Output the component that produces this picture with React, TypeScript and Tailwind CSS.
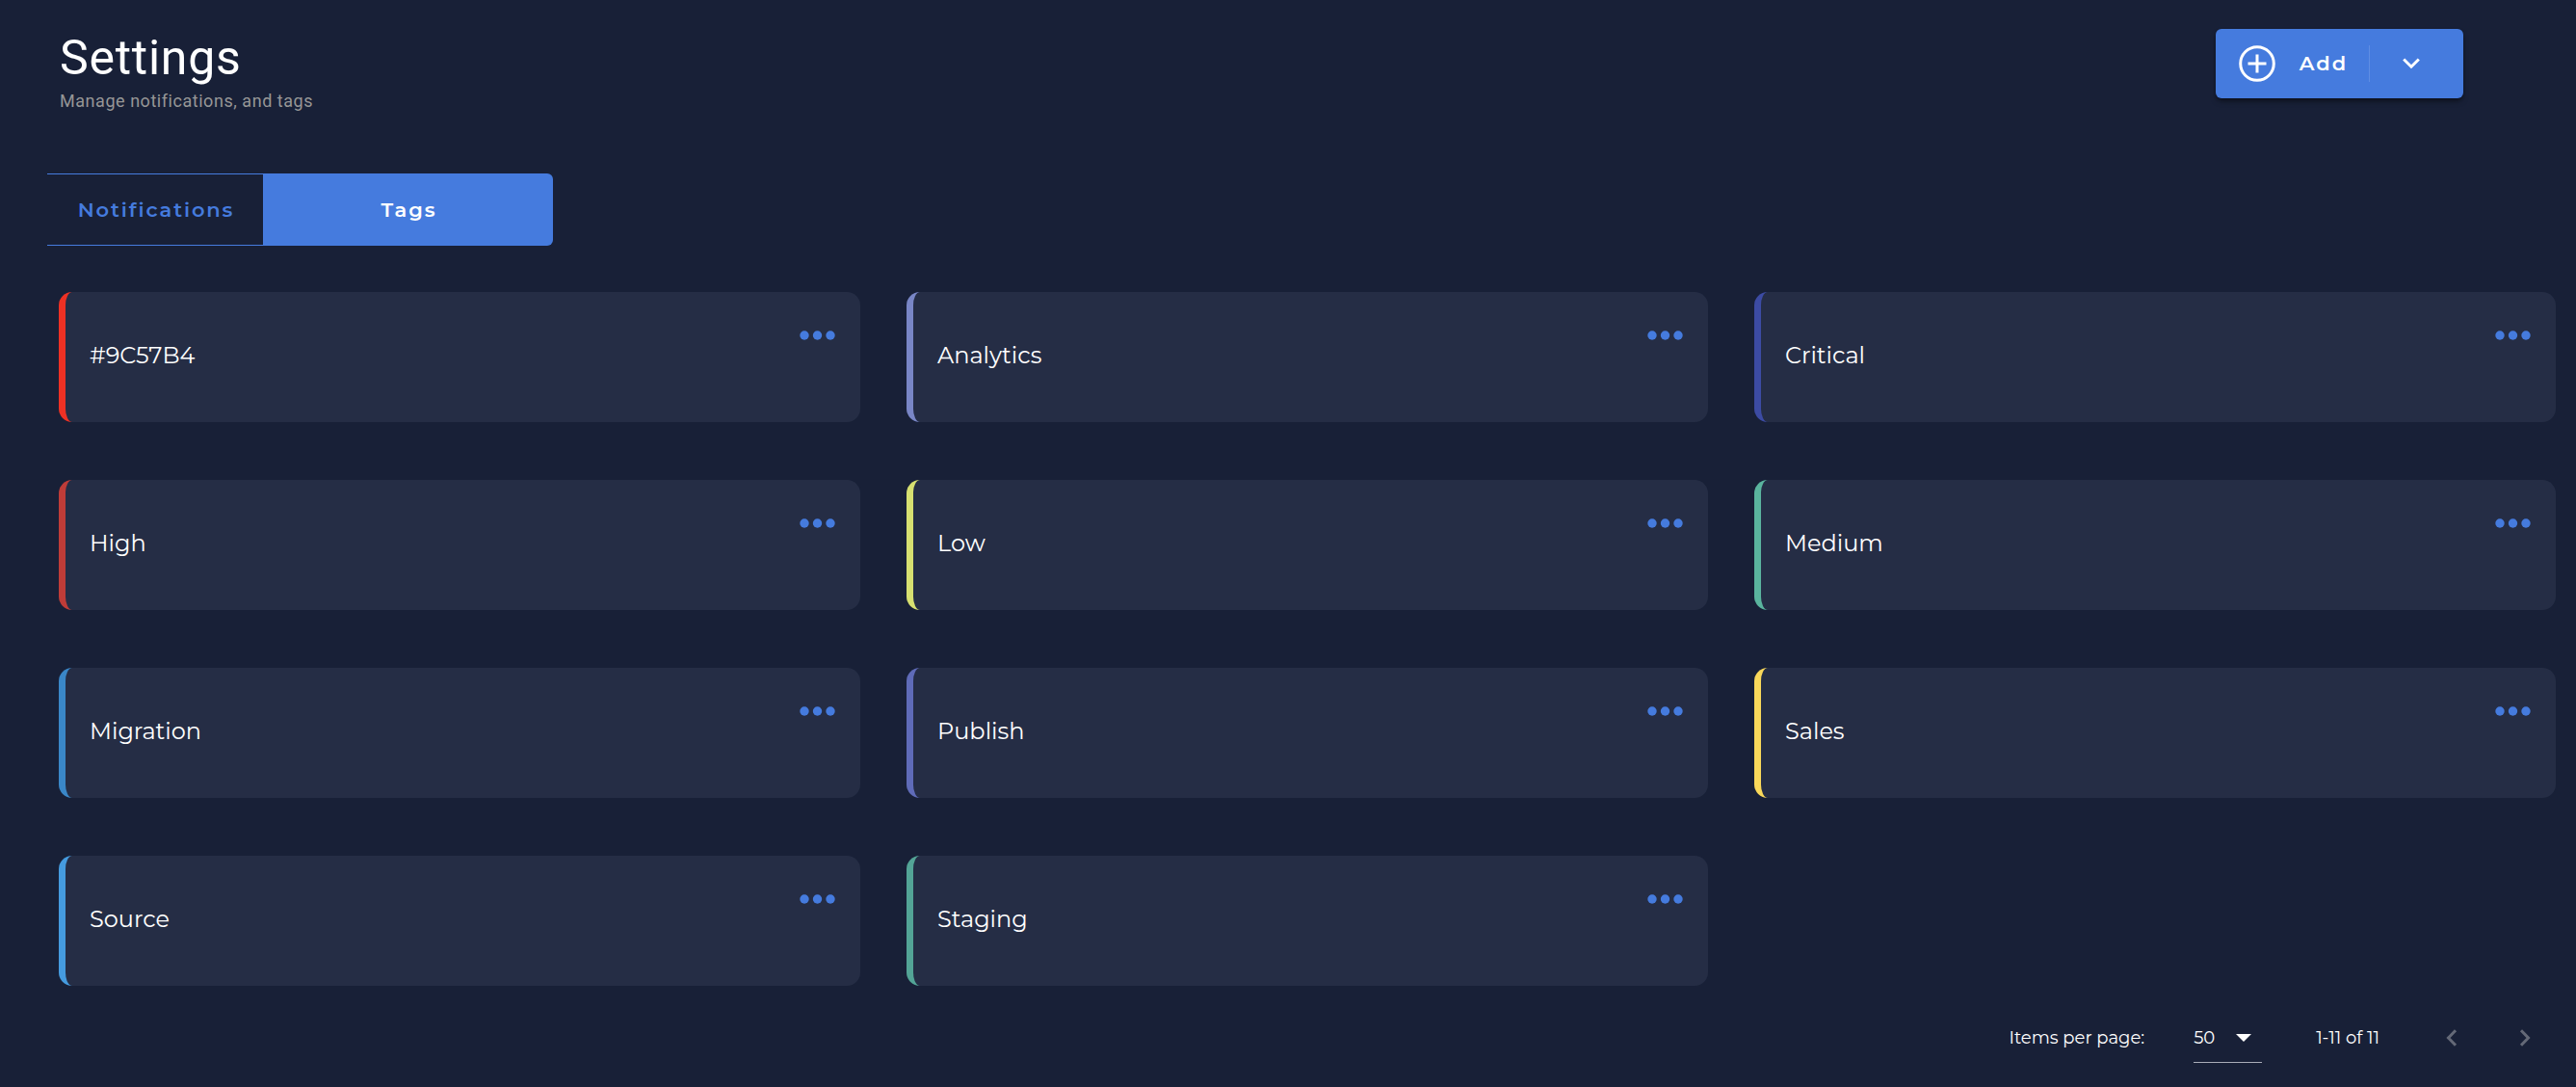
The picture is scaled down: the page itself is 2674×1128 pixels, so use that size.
import React from "react";

type Tag = { name: string; border: string };

const tags: Tag[] = [
  { name: "#9C57B4", border: "border-l-[#ee3124]" },
  { name: "Analytics", border: "border-l-[#7986c6]" },
  { name: "Critical", border: "border-l-[#3c4ba3]" },
  { name: "High", border: "border-l-[#bf3c38]" },
  { name: "Low", border: "border-l-[#d7e070]" },
  { name: "Medium", border: "border-l-[#5ab49e]" },
  { name: "Migration", border: "border-l-[#3a87c8]" },
  { name: "Publish", border: "border-l-[#5f6bb8]" },
  { name: "Sales", border: "border-l-[#f9d85a]" },
  { name: "Source", border: "border-l-[#459bdf]" },
  { name: "Staging", border: "border-l-[#53a496]" },
];

function TagCard({ tag }: { tag: Tag }) {
  return (
    <li
      className={`flex h-[135px] items-center justify-between rounded-[14px] border-l-[7px] bg-[#252d45] pb-[3px] pl-[25px] pr-[26px] ${tag.border}`}
    >
      <span className="text-2xl text-white">{tag.name}</span>
      <button type="button" aria-label={`${tag.name} options`} className="self-start pt-10 text-[#457bde]">
        <svg width="37" height="10" viewBox="0 0 37 10" fill="currentColor" aria-hidden="true">
          <circle cx="5" cy="5" r="4.7" />
          <circle cx="18.5" cy="5" r="4.7" />
          <circle cx="32" cy="5" r="4.7" />
        </svg>
      </button>
    </li>
  );
}

export default function App() {
  return (
    <div className="min-h-screen bg-[#182037] font-['Montserrat','Inter',sans-serif] text-white">
      <header className="flex items-start justify-between pl-[62px] pr-[117px] pt-[30px]">
        <div className="font-['Roboto',sans-serif]">
          <h1 className="text-[50px] leading-[60px] tracking-[0.015em]">Settings</h1>
          <p className="text-lg leading-[30px] tracking-[0.03em] text-[#969696]">Manage notifications, and tags</p>
        </div>
        <div className="flex h-[72px] items-center rounded-md bg-[#457bde] shadow-md shadow-black/40">
          <button type="button" className="flex h-full items-center gap-[25px] pl-6 pr-[22px] text-[21px] font-semibold tracking-[0.09em]">
            <svg width="38" height="38" viewBox="0 0 38 38" fill="none" stroke="currentColor" strokeWidth="3" aria-hidden="true">
              <circle cx="19" cy="19" r="17.3" />
              <path d="M19 9.5v19M9.5 19h19" />
            </svg>
            Add
          </button>
          <button type="button" aria-label="More add options" className="flex h-[38px] items-center border-l border-[#5f8de3] pl-[34px] pr-[45px]">
            <svg width="18" height="12" viewBox="0 0 18 12" fill="none" stroke="currentColor" strokeWidth="3" aria-hidden="true">
              <path d="M1.2 1.5 9 9.2l7.8-7.7" />
            </svg>
          </button>
        </div>
      </header>

      <nav className="mt-[60px] flex pl-[49px] text-[21px] font-semibold tracking-[0.09em]" role="tablist">
        <button type="button" role="tab" aria-selected="false" className="h-[75px] w-[224px] border-y border-[#457bde] pl-0.5 text-[#457bde]">
          Notifications
        </button>
        <button type="button" role="tab" aria-selected="true" className="h-[75px] w-[301px] rounded-r-md bg-[#457bde] pl-0.5 text-white">
          Tags
        </button>
      </nav>

      <main>
        <ul className="mt-12 grid grid-cols-3 gap-x-12 gap-y-[60px] pl-[61px] pr-[21px]">
          {tags.map((tag) => (
            <TagCard key={tag.name} tag={tag} />
          ))}
        </ul>
      </main>

      <footer className="flex h-[105px] items-center justify-end pr-[47px] pt-[3px] text-lg">
        <label htmlFor="page-size">Items per page:</label>
        <div className="relative ml-[51px] flex h-[52px] w-[71px] items-center border-b border-[#a9adb8]">
          <select id="page-size" defaultValue="50" className="h-full w-full appearance-none bg-transparent outline-none">
            <option value="50">50</option>
          </select>
          <svg className="pointer-events-none absolute right-[11px]" width="16" height="8" viewBox="0 0 16 8" fill="currentColor" aria-hidden="true">
            <path d="M0 0h16L8 8z" />
          </svg>
        </div>
        <span className="ml-14">1-11 of 11</span>
        <button type="button" disabled aria-label="Previous page" className="ml-[69px] text-[#646977]">
          <svg width="12" height="18" viewBox="0 0 12 18" fill="none" stroke="currentColor" strokeWidth="3" aria-hidden="true">
            <path d="M10 1.2 2.5 9l7.5 7.8" />
          </svg>
        </button>
        <button type="button" disabled aria-label="Next page" className="ml-16 text-[#646977]">
          <svg width="12" height="18" viewBox="0 0 12 18" fill="none" stroke="currentColor" strokeWidth="3" aria-hidden="true">
            <path d="M2 1.2 9.5 9 2 16.8" />
          </svg>
        </button>
      </footer>
    </div>
  );
}
